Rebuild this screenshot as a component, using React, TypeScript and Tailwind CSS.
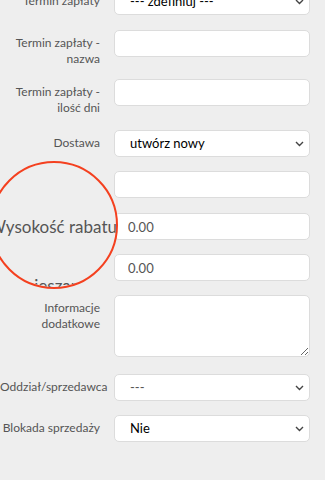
import React from "react";

const font = { fontFamily: "Lato, 'Noto Sans', sans-serif" };

function Chevron() {
  return (
    <svg className="pointer-events-none absolute right-[5px] top-1/2 -translate-y-1/2" width="9" height="6" viewBox="0 0 9 6" fill="none">
      <path d="M1 1l3.5 3.5L8 1" stroke="#444" strokeWidth="1.4" />
    </svg>
  );
}

function Row({ label, children, className = "mb-[14px]" }: { label?: React.ReactNode; children: React.ReactNode; className?: string }) {
  return (
    <div className={`flex items-start gap-[14px] ${className}`}>
      <label className="w-[100px] shrink-0 text-right text-[12px] leading-[16px] pt-[5px] text-[#555]">{label}</label>
      <div className="flex-1">{children}</div>
    </div>
  );
}

function Input({ value = "" }: { value?: string }) {
  return (
    <input
      readOnly
      value={value}
      className="block w-full h-[27px] rounded-[5px] border border-[#dcdcdc] bg-white px-[13px] text-[13px] text-[#555] outline-none"
    />
  );
}

function Select({ value, muted = false }: { value: string; muted?: boolean }) {
  return (
    <div className="relative h-[27px] rounded-[5px] border border-[#dcdcdc] bg-white">
      <div className={`pl-[15px] leading-[25px] text-[13px] ${muted ? "text-[#555]" : "text-black"}`}>{value}</div>
      <Chevron />
    </div>
  );
}

export default function App() {
  return (
    <div className="relative w-[325px] h-[480px] overflow-hidden bg-[#eeeeee]" style={font}>
      <div className="-mt-[12px] pr-[15px]">
        <Row label="Termin zapłaty" className="mb-[15px]">
          <Select value="--- zdefiniuj ---" />
        </Row>
        <Row label={<>Termin zapłaty -<br />nazwa</>} className="mb-[12px]">
          <Input />
        </Row>
        <Row label={<>Termin zapłaty -<br />ilość dni</>}>
          <Input />
        </Row>
        <Row label="Dostawa">
          <Select value="utwórz nowy" />
        </Row>
        <Row className="mb-[15px]">
          <Input />
        </Row>
        <Row>
          <Input value="0.00" />
        </Row>
        <Row>
          <Input value="0.00" />
        </Row>
        <Row label={<>Informacje<br />dodatkowe</>} className="mb-[17px]">
          <textarea readOnly className="block w-full h-[62px] rounded-[5px] border border-[#dcdcdc] bg-white outline-none" />
        </Row>
        <Row label="Oddział/sprzedawca">
          <Select value="---" muted />
        </Row>
        <Row label="Blokada sprzedaży">
          <Select value="Nie" />
        </Row>
      </div>

      {/* lupa */}
      <div className="absolute left-[-10px] top-[161px] w-[128px] h-[128px] rounded-full border-2 border-[#f4401f] overflow-hidden bg-[#eeeeee]">
        <div className="absolute right-[-1px] top-[54px] whitespace-nowrap text-[17px] leading-[20px] text-[#555]">Wysokość rabatu</div>
        <div className="absolute left-[-19px] top-[113px] whitespace-nowrap text-[17px] leading-[20px] text-[#555]">Rabat mieszany</div>
      </div>
    </div>
  );
}
